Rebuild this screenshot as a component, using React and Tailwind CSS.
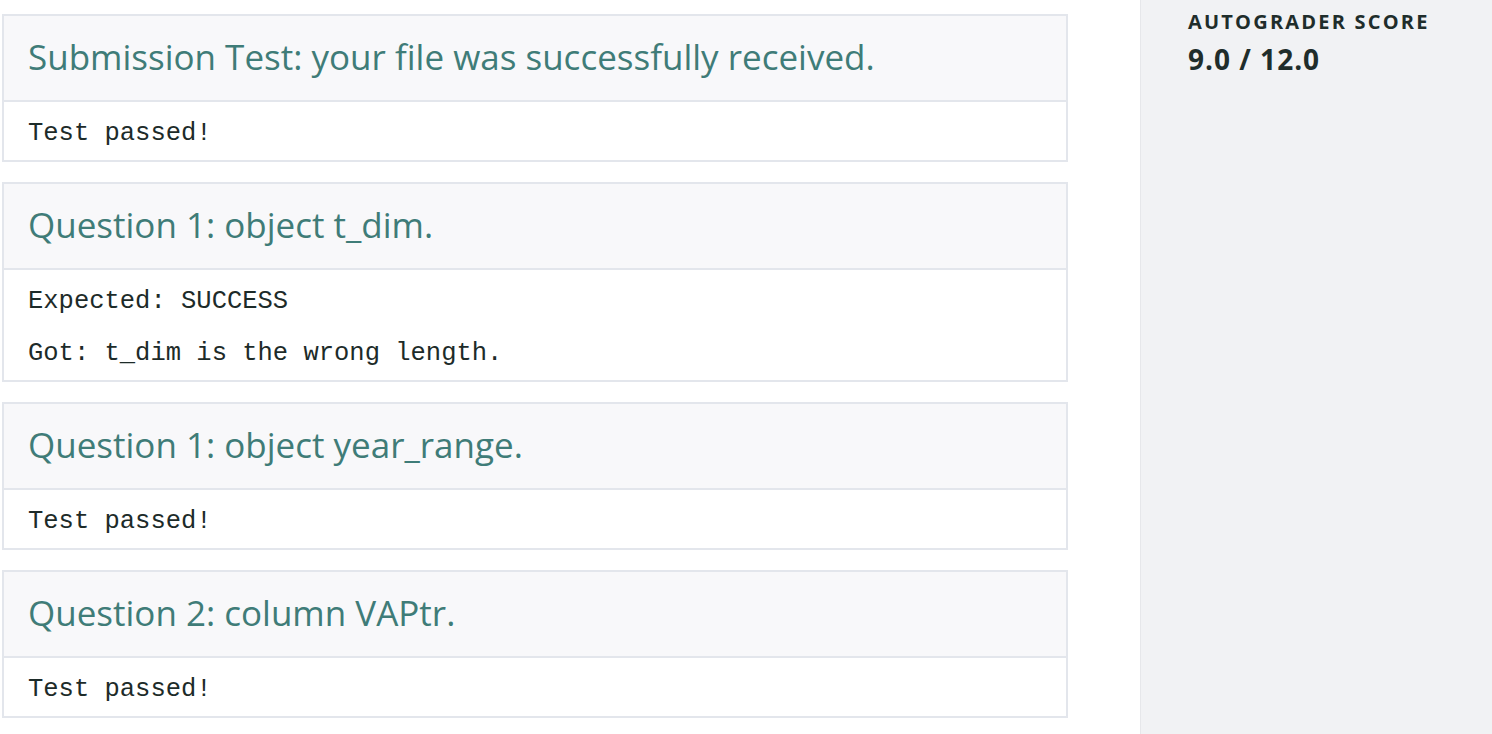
import React from "react";

const results = [
    { title: "Submission Test: your file was successfully received.", lines: ["Test passed!"] },
    { title: "Question 1: object t_dim.", lines: ["Expected: SUCCESS", "Got: t_dim is the wrong length."] },
    { title: "Question 1: object year_range.", lines: ["Test passed!"] },
    { title: "Question 2: column VAPtr.", lines: ["Test passed!"] },
];

const ResultCard = ({ title, lines }) => (
    <div className="border-2 border-[#e3e6ec] bg-white">
        <div className="h-[86px] bg-[#f8f8fa] border-b-2 border-[#e3e6ec] px-[24px] flex items-center">
            <h2 className="text-[35px] leading-[44px] text-[#3f7c78] font-['Open_Sans',sans-serif] pb-[2px]">{title}</h2>
        </div>
        <div className="pt-[19px] pb-[13px] px-[24px] flex flex-col gap-[26px]">
            {lines.map((line, i) => (
                <p key={i} className="text-[25.5px] leading-[26px] text-[#1d2b29] font-['Liberation_Mono',monospace] whitespace-pre">
                    {line}
                </p>
            ))}
        </div>
    </div>
);

export default function App() {
    return (
        <div className="flex w-[1492px] h-[734px] overflow-hidden bg-white">
            <main className="w-[1068px] pl-[2px] pt-[14px] flex flex-col gap-[20px]">
                {results.map((r, i) => (
                    <ResultCard key={i} title={r.title} lines={r.lines} />
                ))}
            </main>
            <aside className="ml-[72px] flex-1 h-full bg-[#f1f2f4] border-l border-[#e6e7ea] pl-[47px] pt-[9px] font-['Open_Sans',sans-serif] text-[#1f2d2b]">
                <div className="text-[20px] font-bold leading-[26px] tracking-[2.2px]">AUTOGRADER SCORE</div>
                <div className="text-[28px] font-bold leading-[36px] mt-[6px] tracking-[1px]">9.0 / 12.0</div>
            </aside>
        </div>
    );
}
